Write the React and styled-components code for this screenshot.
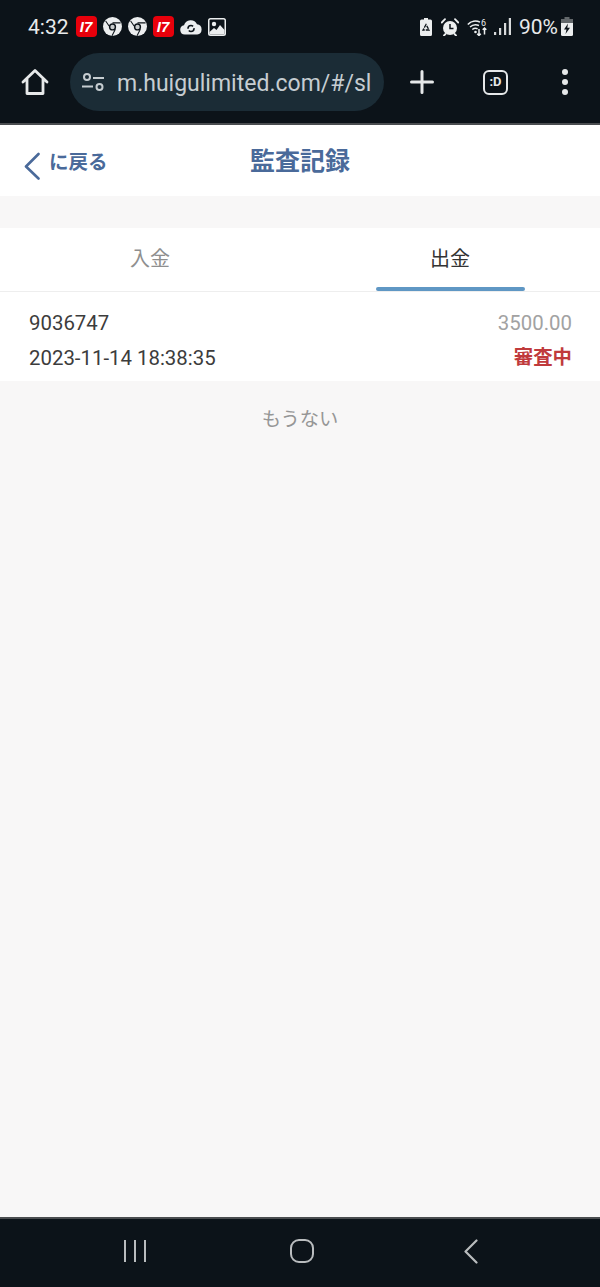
import React from 'react';
import styled, { createGlobalStyle } from 'styled-components';

const GlobalStyle = createGlobalStyle`
  html, body {
    margin: 0;
    padding: 0;
    background: #f8f7f7;
  }
  #root {
    height: 1287px;
  }
`;

const Page = styled.div`
  width: 600px;
  height: 1287px;
  display: flex;
  flex-direction: column;
  overflow: hidden;
  background: #f8f7f7;
  font-family: Roboto, "Noto Sans CJK JP", sans-serif;
`;

const Chrome = styled.div`
  height: 123px;
  flex: none;
  background: #0c1319;
  border-bottom: 2px solid #4a4d50;
`;

const StatusBar = styled.div`
  height: 53px;
  box-sizing: border-box;
  padding: 0 27px 0 28px;
  display: flex;
  align-items: center;
  justify-content: space-between;
  color: #e8eaeb;
`;

const StatusGroup = styled.div`
  display: flex;
  align-items: center;
  gap: ${p => p.$gap}px;
`;

const Time = styled.span`
  font-size: 21px;
  line-height: 24px;
  margin-right: 1px;
`;

const Percent = styled.span`
  font-size: 21px;
  line-height: 24px;
  margin-right: -5px;
`;

const RedBadge = styled.span`
  width: 21px;
  height: 21px;
  border-radius: 4px;
  background: #e8000b;
  color: #fff;
  font-family: "Liberation Sans", sans-serif;
  font-size: 15px;
  font-weight: 700;
  font-style: italic;
  line-height: 21px;
  text-align: center;
`;

const UrlRow = styled.div`
  height: 58px;
  display: flex;
  align-items: center;
`;

const HomeSlot = styled.div`
  width: 70px;
  flex: none;
  display: flex;
  justify-content: center;
`;

const UrlPill = styled.div`
  width: 314px;
  height: 58px;
  box-sizing: border-box;
  border-radius: 29px;
  background: #1b2c36;
  display: flex;
  align-items: center;
  padding-left: 12px;
  gap: 13px;
  flex: none;
`;

const UrlText = styled.span`
  font-size: 23px;
  padding-top: 2px;
  color: #c6cdd1;
  white-space: nowrap;
`;

const BarActions = styled.div`
  flex: 1;
  display: flex;
  align-items: center;
  justify-content: space-between;
  padding: 0 31px 0 26px;
`;

const TabCount = styled.span`
  width: 25px;
  height: 25px;
  margin-right: 4px;
  box-sizing: border-box;
  border: 2.5px solid #e6e8e9;
  border-radius: 6px;
  color: #e6e8e9;
  font-size: 13px;
  font-weight: 700;
  line-height: 20px;
  text-align: center;
`;

const Header = styled.div`
  height: 71px;
  flex: none;
  position: relative;
  display: flex;
  align-items: center;
  justify-content: center;
  background: #fff;
`;

const BackLink = styled.div`
  position: absolute;
  left: 24px;
  top: 27px;
  display: flex;
  align-items: flex-start;
  gap: 8px;
  color: #4a6a9a;
`;

const BackText = styled.span`
  font-size: 19.5px;
  font-weight: 700;
  line-height: 21px;
`;

const Title = styled.h1`
  margin: 3px 0 0;
  font-size: 25px;
  font-weight: 700;
  line-height: 30px;
  color: #4a6a9a;
`;

const Tabs = styled.div`
  margin-top: 32px;
  height: 63px;
  flex: none;
  display: flex;
  background: #fff;
  border-bottom: 1px solid #eeeeee;
`;

const Tab = styled.div`
  position: relative;
  flex: 1;
  text-align: center;
  font-size: 20px;
  line-height: 62px;
  color: ${p => (p.$active ? '#333' : '#8f8f8f')};
  &::after {
    content: '';
    display: ${p => (p.$active ? 'block' : 'none')};
    position: absolute;
    left: 76px;
    right: 75px;
    bottom: 0;
    height: 4px;
    border-radius: 2px;
    background: #5f97c4;
  }
`;

const Record = styled.div`
  height: 89px;
  flex: none;
  box-sizing: border-box;
  padding: 13px 28px 0 29px;
  background: #fff;
`;

const RecordRow = styled.div`
  height: 35px;
  display: flex;
  align-items: center;
  justify-content: space-between;
  font-size: 20.4px;
  color: #3c3c3c;
`;

const Amount = styled.span`
  color: #a2a2a2;
`;

const Status = styled.span`
  font-size: 19.4px;
  font-weight: 700;
  line-height: 24px;
  margin-top: 1px;
  color: #c03a3c;
`;

const NoMore = styled.div`
  flex: 1;
  padding-top: 25px;
  text-align: center;
  font-size: 19.3px;
  line-height: 28px;
  color: #969696;
`;

const NavBar = styled.div`
  height: 70px;
  flex: none;
  display: flex;
  align-items: center;
  gap: 144px;
  padding: 0 0 4px 124px;
  box-sizing: border-box;
  background: #0c1319;
  border-top: 2px solid #4a4d50;
`;

const WifiSvg = styled.svg`
  margin-right: -3px;
`;

const AlarmSvg = styled.svg`
  margin-left: 1px;
`;

const BackNavSvg = styled.svg`
  margin-left: 6px;
`;

const ChromeIcon = () => (
  <svg width="19" height="19" viewBox="0 0 20 20">
    <circle cx="10" cy="10" r="10" fill="#eceeef" />
    <circle cx="10" cy="10.500" r="3.800" fill="#0c1319" />
    <circle cx="10" cy="10.500" r="2.300" fill="#c9cccd" />
    <path d="M10 6.200h8.500M6.400 9.500 2.800 4.200M13 13 9.500 19.800" stroke="#0c1319" strokeWidth="1.100" fill="none" />
  </svg>
);

const CloudIcon = () => (
  <svg width="22" height="16" viewBox="0 0 22 16">
    <path d="M4.800 15.500a4.700 4.700 0 0 1-.8-9.300A7 7 0 0 1 17 5.200a5.200 5.200 0 0 1 .2 10.300z" fill="#eceeef" />
    <circle cx="11" cy="9.500" r="3" fill="none" stroke="#0c1319" strokeWidth="1.600" strokeDasharray="7 2" />
  </svg>
);

const ImageIcon = () => (
  <svg width="18" height="18" viewBox="0 0 18 18">
    <rect width="18" height="18" rx="2.500" fill="#eceeef" />
    <rect x="1.500" y="1.500" width="15" height="15" rx="1" fill="#0c1319" />
    <circle cx="6" cy="6" r="2.200" fill="#eceeef" />
    <path d="M1.500 14 6 10l2.500 2 3.500-5 4.500 5v4.500h-15z" fill="#eceeef" />
  </svg>
);

const RecycleBatteryIcon = () => (
  <svg width="12" height="18" viewBox="0 0 12 18">
    <path d="M4 0h4v1.500h2.500A1.500 1.500 0 0 1 12 3v13.500a1.500 1.500 0 0 1-1.500 1.500h-9A1.500 1.500 0 0 1 0 16.500V3a1.500 1.500 0 0 1 1.500-1.500H4z" fill="#eceeef" />
    <path d="M6 6.500 3 12h6z" fill="none" stroke="#0c1319" strokeWidth="1.300" strokeDasharray="3.500 1" />
  </svg>
);

const AlarmIcon = () => (
  <AlarmSvg width="18" height="18" viewBox="0 0 18 18">
    <circle cx="9" cy="10" r="7" fill="#eceeef" />
    <path d="M9 6v4.500h3.500" fill="none" stroke="#0c1319" strokeWidth="1.500" />
    <path d="M.8 4.500 4 1.200M17.200 4.500 14 1.200M4.500 16l-1.500 1.500M13.500 16l1.500 1.500" stroke="#eceeef" strokeWidth="1.800" strokeLinecap="round" />
  </AlarmSvg>
);

const WifiIcon = () => (
  <WifiSvg width="22" height="18" viewBox="0 0 22 18" fill="none" stroke="#eceeef" strokeWidth="1.500">
    <path d="M.8 6.500C4 3 9 2.200 13 4.200M3 9c2.500-2.300 6-2.800 9-1.500M5.300 11.500c1.600-1.300 3.600-1.500 5.300-.8" />
    <circle cx="8.500" cy="14" r="1.300" fill="#eceeef" stroke="none" />
    <path d="M12 11v6.500m-1.800-1.800 1.800 1.800 1.800-1.800M17.500 16.500V10m-1.800 1.800 1.800-1.800 1.800 1.800" />
    <text x="14" y="7.500" fill="#eceeef" stroke="none" fontSize="9" fontFamily="Roboto, sans-serif">6</text>
  </WifiSvg>
);

const SignalIcon = () => (
  <svg width="17" height="17" viewBox="0 0 17 17" fill="#d8dadb">
    <rect x="0" y="14" width="2.200" height="3" />
    <rect x="5" y="10" width="2.200" height="7" />
    <rect x="10" y="5" width="2.200" height="12" />
    <rect x="14.800" y="0" width="2.200" height="17" />
  </svg>
);

const ChargingIcon = () => (
  <svg width="12" height="19" viewBox="0 0 12 19">
    <path d="M3.500 0h5v2H12v4H0V2h3.500z" fill="#63686b" />
    <path d="M0 6h12v11.500a1.500 1.500 0 0 1-1.500 1.500h-9A1.500 1.500 0 0 1 0 17.500z" fill="#eceeef" />
    <path d="M7 6.500 3 12.500h2.500L4.500 17 9 10.800H6.300z" fill="#0c1319" />
  </svg>
);

const HomeIcon = () => (
  <svg width="28" height="28" viewBox="0 0 28 28" fill="none" stroke="#e6e8e9" strokeWidth="2.800" strokeLinejoin="round" strokeLinecap="round">
    <path d="M2 14 14 2.500 26 14M6 11v14.500h16V11" />
  </svg>
);

const TuneIcon = () => (
  <svg width="22" height="18" viewBox="0 0 22 18" fill="none" stroke="#c6cdd1" strokeWidth="2">
    <circle cx="5" cy="4" r="3" />
    <circle cx="17.500" cy="14" r="3" />
    <path d="M11 5h11M0 13.500h11" />
  </svg>
);

const PlusIcon = () => (
  <svg width="24" height="24" viewBox="0 0 24 24" stroke="#e6e8e9" strokeWidth="3" strokeLinecap="round">
    <path d="M12 1.500v21M1.500 12h21" />
  </svg>
);

const DotsIcon = () => (
  <svg width="8" height="26" viewBox="0 0 8 26" fill="#e6e8e9">
    <circle cx="4" cy="3" r="3" />
    <circle cx="4" cy="13" r="3" />
    <circle cx="4" cy="23" r="3" />
  </svg>
);

const BackIcon = () => (
  <svg width="17" height="28" viewBox="0 0 17 28" fill="none" stroke="#4a6a9a" strokeWidth="2.600" strokeLinecap="round" strokeLinejoin="round">
    <path d="M14.500 2 2 14.500 14.500 26.500" />
  </svg>
);

const RecentsIcon = () => (
  <svg width="22" height="22" viewBox="0 0 22 22" stroke="#b9bcbe" strokeWidth="2">
    <path d="M1 0v22M11 0v22M21 0v22" />
  </svg>
);

const HomeNavIcon = () => (
  <svg width="24" height="24" viewBox="0 0 24 24" fill="none" stroke="#b9bcbe" strokeWidth="2">
    <rect x="1" y="1" width="22" height="22" rx="8" />
  </svg>
);

const BackNavIcon = () => (
  <BackNavSvg width="14" height="25" viewBox="0 0 14 25" fill="none" stroke="#b9bcbe" strokeWidth="2.200" strokeLinecap="round" strokeLinejoin="round">
    <path d="M12.500 1.500 1.500 12.500 12.500 23.500" />
  </BackNavSvg>
);

export default function App() {
  return (
    <Page>
      <GlobalStyle />
      <Chrome>
        <StatusBar>
          <StatusGroup $gap={6}>
            <Time>4:32</Time>
            <RedBadge>I7</RedBadge>
            <ChromeIcon />
            <ChromeIcon />
            <RedBadge>I7</RedBadge>
            <CloudIcon />
            <ImageIcon />
          </StatusGroup>
          <StatusGroup $gap={8}>
            <RecycleBatteryIcon />
            <AlarmIcon />
            <WifiIcon />
            <SignalIcon />
            <Percent>90%</Percent>
            <ChargingIcon />
          </StatusGroup>
        </StatusBar>
        <UrlRow>
          <HomeSlot>
            <HomeIcon />
          </HomeSlot>
          <UrlPill>
            <TuneIcon />
            <UrlText>m.huigulimited.com/#/sl</UrlText>
          </UrlPill>
          <BarActions>
            <PlusIcon />
            <TabCount>:D</TabCount>
            <DotsIcon />
          </BarActions>
        </UrlRow>
      </Chrome>
      <Header>
        <BackLink>
          <BackIcon />
          <BackText>に戻る</BackText>
        </BackLink>
        <Title>監査記録</Title>
      </Header>
      <Tabs>
        <Tab>入金</Tab>
        <Tab $active>出金</Tab>
      </Tabs>
      <Record>
        <RecordRow>
          <span>9036747</span>
          <Amount>3500.00</Amount>
        </RecordRow>
        <RecordRow>
          <span>2023-11-14 18:38:35</span>
          <Status>審査中</Status>
        </RecordRow>
      </Record>
      <NoMore>もうない</NoMore>
      <NavBar>
        <RecentsIcon />
        <HomeNavIcon />
        <BackNavIcon />
      </NavBar>
    </Page>
  );
}
